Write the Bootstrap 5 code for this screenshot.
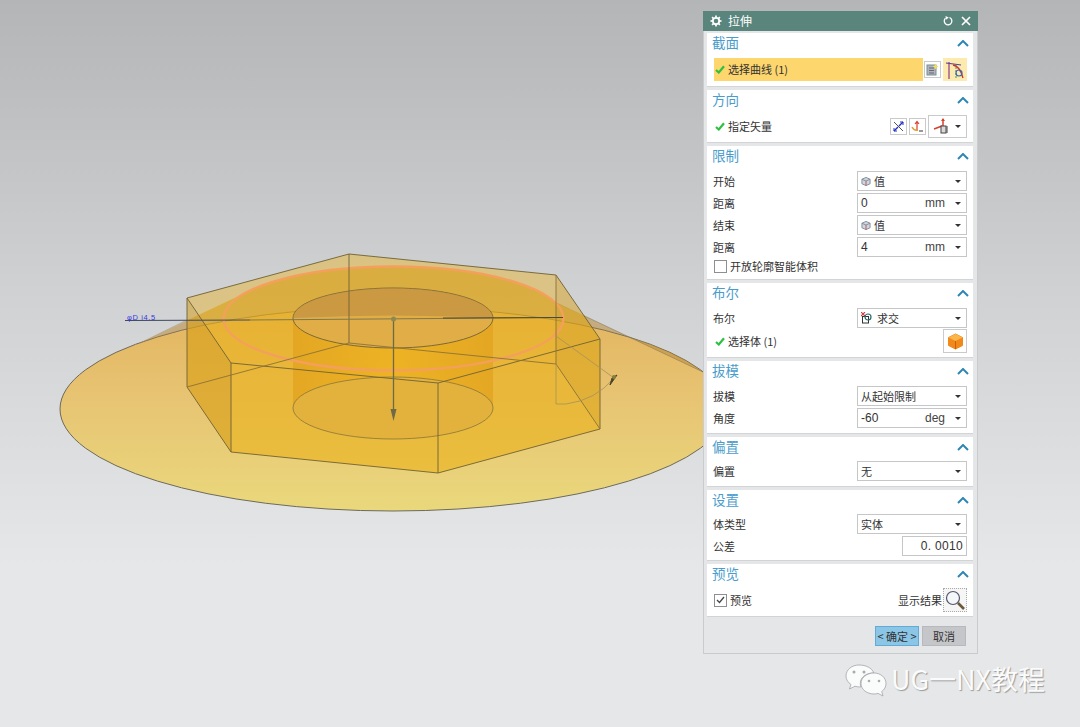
<!DOCTYPE html>
<html lang="zh"><head><meta charset="utf-8"><title>拉伸</title>
<link href="https://cdn.jsdelivr.net/npm/bootstrap@5.3.0/dist/css/bootstrap.min.css" rel="stylesheet">
<style>
html,body{margin:0;height:727px;overflow:hidden}
body{background:linear-gradient(#b4b5b6 0,#cfd1d3 40%,#e6e7e9 78%,#e6e7e9 100%);font-family:"Noto Sans CJK SC","Liberation Sans",sans-serif;font-size:11px;color:#333;position:relative}
.scene{position:absolute;left:0;top:0}
.dlg{position:absolute;left:703px;top:11px;width:275px;height:643px;background:#e5e6e8;border:1px solid #c9cbcd;border-top:0}
.dlg-head{height:20px;background:#5a857c;color:#fff;font-size:12px;margin:0 -1px;padding:0 7px}
.gear{margin-right:6px}
.dlg-body{padding:2px 4px 0 3px}
.sect{background:#fff;border-bottom:1px solid #d3d4d6;margin-bottom:3px;padding:0 6px}
.h-sec{height:54px}.h-dir{height:53px}.h-lim{height:134px}.h-boo{height:75px}.h-dra{height:73px}.h-off{height:50px}.h-set{height:71px}.h-pre{height:53px}
.sect-title{height:20px;color:#4a9ccb;font-size:13.5px;line-height:19px;margin:0 -2px 4px -1px}
.tight{margin-bottom:3px}
.wide{margin-bottom:5px}
.chev{width:12px;height:7px;margin-top:7px}
.rw{height:22px}
.rw-24{height:24px}
.rw-17{height:17px}
.sel{width:110px;height:20px;border:1px solid #c4c6c8;padding:0 5px 0 3px;background:#fff;flex:none}
.caret{width:0;height:0;border-left:3px solid transparent;border-right:3px solid transparent;border-top:3px solid #333;margin-left:auto;flex:none}
.caret-n{margin-left:0}
.unit{margin-left:auto;margin-right:10px;font-size:12px;font-family:"Liberation Sans",sans-serif;color:#444}
.num{font-family:"Liberation Sans",sans-serif;font-size:12px}
.chk{width:13px;height:13px;border:1px solid #8d8f91;background:#fff;flex:none;margin:0 3px 0 1px}
.ico-btn{border:1px solid #c8cacc;background:#fff;flex:none}
.ib-17{width:17px;height:17px;margin-right:2px}
.ib-24{width:24px;height:24px}
.ib-drop{width:39px;height:23px;padding:0 5px 0 3px}
.ib-hl{width:24px;height:23px;background:#fdeaaf}
.ib-dot{border-style:dotted;border-color:#aaa;background:#f6f6f6}
.tick{width:10px;height:9px;flex:none;margin:0 3px 0 2px}
.hl{background:#fdd66e;height:23px;width:209px;margin-left:1px}
.hl .tick{margin-left:1px}
.opt{width:10px;height:11px;margin-right:3px}
.act{height:20px;font-size:11px;padding:0;border-radius:0;line-height:18px;color:#333;width:44px}
.act-ok,.act-ok:hover{background:#8bc6e6;border:1px solid #62abd6}
.act-no,.act-no:hover{background:#c5c6c9;border:1px solid #b8b9bc}
.act-row{padding:6px 7px 0 0;gap:3px}
.res-lab{margin-right:1px}
.mark-wx{position:absolute;left:844px;top:660px;color:#fafbfb;font-size:27px;line-height:38px;text-shadow:1px 1px 1px #9a9b9c;white-space:nowrap}
.wx-ico{margin-right:3px}
.blue-note{font-size:7.5px;fill:#3a3ae0;font-family:"Liberation Sans",sans-serif;letter-spacing:.6px}
.tolb{width:65px;height:20px;border:1px solid #c4c6c8;text-align:right;padding-right:3px;font-size:12px;line-height:18px;font-family:"Liberation Sans",sans-serif;letter-spacing:.3px}
</style></head><body>

<svg class="scene" width="1080" height="727" viewBox="0 0 1080 727" xmlns="http://www.w3.org/2000/svg">
<defs>
<linearGradient id="disc" x1="0" y1="0" x2="0" y2="1"><stop offset="0" stop-color="#e3b45f"/><stop offset=".45" stop-color="#e7c473"/><stop offset="1" stop-color="#ead87c"/></linearGradient>
<linearGradient id="bore" x1="0" y1="0" x2="1" y2="0"><stop offset="0" stop-color="#e3a31e"/><stop offset=".5" stop-color="#eeb21f"/><stop offset="1" stop-color="#e3a31e"/></linearGradient>
<symbol id="chv" viewBox="0 0 12 7"><path d="M1 6 6 1 11 6" fill="none" stroke="#2f86b5" stroke-width="2"/></symbol>
<symbol id="tck" viewBox="0 0 10 9"><path d="M1 5 3.800 7.500 9 1.200" fill="none" stroke="#2fc043" stroke-width="2.200"/></symbol>
<symbol id="cub" viewBox="0 0 11 11"><path d="M5.500 1 10 3V8L5.500 10 1 8V3Z" fill="#cfd6de" stroke="#7d8a99"/><path d="M5.500 5V10" stroke="#c74a4a"/><path d="M1 3 5.500 5 10 3" fill="none" stroke="#7d8a99"/></symbol>
</defs>
<!-- disc -->
<ellipse cx="393" cy="409" rx="333" ry="102" fill="url(#disc)" stroke="#6d6a5c" stroke-width="1"/>
<!-- cone wedge above the disc edge, tangent to the sketch circle -->
<path d="M140 343 L245 293 A170 52 0 0 1 555 302 L703 372 A333 102 0 0 0 393 307 A333 102 0 0 0 140 343Z" fill="#b98a3a" fill-opacity=".55"/>
<line x1="555" y1="302" x2="703" y2="372" stroke="#8a7b55" stroke-width=".6"/>
<line x1="140" y1="343" x2="187" y2="320" stroke="#a58c5c" stroke-width=".5"/>
<!-- hex body -->
<polygon points="187,298 349,254 556,275 600,339 600,429 438,473 231,452 187,387" fill="#eab013" fill-opacity=".58"/>
<path d="M187 298 L349 254 L556 275 L584 316 L555 302 A170 52 0 0 0 245 293 L187 320Z" fill="#d5c9ae" fill-opacity=".45"/>
<polygon points="187,298 231,363 231,452 187,387" fill="#b8862a" fill-opacity=".22"/>
<polygon points="556,275 600,339 600,429 556,364" fill="#b8862a" fill-opacity=".16"/>
<!-- bore -->
<path d="M293 318 V408 A100 31 0 0 1 493 408 V318 A100 30 0 0 1 293 318Z" fill="url(#bore)" fill-opacity=".8"/>
<ellipse cx="393" cy="408" rx="100" ry="31" fill="#e2b23d" stroke="#8a7338" stroke-width=".8"/>
<ellipse cx="393" cy="318" rx="100" ry="30" fill="#e0ad46" stroke="#6f6136" stroke-width=".9"/>
<path d="M293 318 A100 30 0 0 1 493 318 A200 18 0 0 0 293 318Z" fill="#bb8c40" fill-opacity=".6"/>
<!-- orange sketch -->
<ellipse cx="393.500" cy="318.500" rx="170" ry="52" fill="none" stroke="#f4a05c" stroke-width="2.400"/>
<!-- edges -->
<g fill="none" stroke="#6f6136" stroke-width=".9">
<polygon points="187,298 349,254 556,275 600,339 438,383 231,363"/>
<polyline points="187,298 187,387 231,452 438,473 600,429 600,339"/>
<line x1="231" y1="363" x2="231" y2="452"/><line x1="438" y1="383" x2="438" y2="473"/>
<line x1="349" y1="254" x2="349" y2="343"/>
<polyline points="187,387 349,343 556,364 600,429" stroke="#8a7338"/>
<line x1="556" y1="275" x2="556" y2="364" stroke="#8a7338"/>
</g>
<g fill="none" stroke="#a3925a" stroke-width=".8">
<path d="M556 364 V404 H566 Q596 400 614 378 L556 336"/>
</g>
<polygon points="610,385 617,375 612,378" fill="#4a442a" stroke="#4a442a"/>
<circle cx="614" cy="377" r="2" fill="#8a7f3e"/>
<!-- axis -->
<line x1="125" y1="320.500" x2="250" y2="320" stroke="#3d4a5e" stroke-width="1"/>
<line x1="250" y1="320" x2="563" y2="317.500" stroke="#7d7850" stroke-width="1"/>
<line x1="443" y1="318" x2="563" y2="317.500" stroke="#3e3d30" stroke-width=".8"/>
<text class="blue-note" x="127" y="320">φD i4.5</text>
<line x1="393.500" y1="319" x2="393.500" y2="412" stroke="#6e6a45" stroke-width="1.300"/>
<polygon points="390.500,409 396.500,409 393.500,421" fill="#6e6a45"/>
<circle cx="393.500" cy="319" r="2.500" fill="#8c8a52"/>
</svg>

<div class="dlg">
  <div class="dlg-head d-flex align-items-center">
    <svg class="gear" width="12" height="12" viewBox="0 0 12 12"><circle cx="6" cy="6" r="3.200" fill="none" stroke="#fff" stroke-width="1.800"/><g stroke="#fff" stroke-width="1.700"><line x1="6" y1=".5" x2="6" y2="2.500"/><line x1="6" y1="9.500" x2="6" y2="11.500"/><line x1=".5" y1="6" x2="2.500" y2="6"/><line x1="9.500" y1="6" x2="11.500" y2="6"/><line x1="2.100" y1="2.100" x2="3.500" y2="3.500"/><line x1="8.500" y1="8.500" x2="9.900" y2="9.900"/><line x1="2.100" y1="9.900" x2="3.500" y2="8.500"/><line x1="8.500" y1="3.500" x2="9.900" y2="2.100"/></g></svg>
    <span>拉伸</span>
    <svg class="ms-auto me-2" width="10" height="10" viewBox="0 0 10 10"><path d="M6.500 1.500A3.800 3.800 0 1 1 2.500 2.200" fill="none" stroke="#fff" stroke-width="1.300"/><path d="M2.500 0 3 3.800 5.800 1.500Z" fill="#fff"/></svg>
    <svg width="10" height="10" viewBox="0 0 10 10"><path d="M1 1 9 9M9 1 1 9" stroke="#fff" stroke-width="1.700"/></svg>
  </div>
  <div class="dlg-body">
    <div class="sect h-sec">
      <div class="sect-title wide d-flex justify-content-between">截面<svg class="chev"><use href="#chv"/></svg></div>
      <div class="d-flex align-items-center">
        <div class="hl d-flex align-items-center"><svg class="tick"><use href="#tck"/></svg>选择曲线 (1)</div>
        <div class="ico-btn ib-17 ms-auto d-flex align-items-center justify-content-center"><svg width="13" height="13" viewBox="0 0 13 13"><rect x="1" y="2" width="9" height="10" fill="#aeb4b8" stroke="#7b8b97"/><path d="M3 5H8M3 7.500H8M3 10H8" stroke="#667"/><path d="M9.500 .5 10.400 2.600 12.500 3.500 10.400 4.400 9.500 6.500 8.600 4.400 6.500 3.500 8.600 2.600Z" fill="#f1df55"/></svg></div>
        <div class="ib-hl d-flex align-items-center justify-content-center"><svg width="20" height="20" viewBox="0 0 20 20"><path d="M1 3 16 5" stroke="#4a3f9a" stroke-width="1.200" fill="none"/><path d="M4 2V19" stroke="#8a3a8a" stroke-width="1.200"/><path d="M11 4V19" stroke="#3d9a6a" stroke-width="1" stroke-dasharray="2 1"/><path d="M8 5Q15 6 18 18" stroke="#d2302f" stroke-width="1.300" fill="none"/><circle cx="14" cy="13" r="3" fill="none" stroke="#3a67b0" stroke-width="1.200"/></svg></div>
      </div>
    </div>
    <div class="sect h-dir">
      <div class="sect-title d-flex justify-content-between">方向<svg class="chev"><use href="#chv"/></svg></div>
      <div class="d-flex align-items-center rw-24">
        <svg class="tick"><use href="#tck"/></svg>指定矢量
        <div class="ico-btn ib-17 ms-auto d-flex align-items-center justify-content-center"><svg width="13" height="13" viewBox="0 0 13 13"><path d="M7 6 11 2M2 11 6 7" stroke="#2230c8" stroke-width="1.400"/><path d="M2 2 11 11" stroke="#555" stroke-width="1"/><path d="M8 2H11V5M2 8V11H5" fill="none" stroke="#2230c8"/></svg></div>
        <div class="ico-btn ib-17 d-flex align-items-center justify-content-center"><svg width="13" height="13" viewBox="0 0 13 13"><path d="M6 10V2M4 4 6 1.500 8 4" fill="none" stroke="#d6402c" stroke-width="1.200"/><path d="M1 7Q3 11 7 10" fill="none" stroke="#e89a32" stroke-width="1.500"/><path d="M8 11H12" stroke="#333"/></svg></div>
        <div class="ico-btn ib-drop d-flex align-items-center"><svg width="20" height="18" viewBox="0 0 20 18"><path d="M2 12 10 9" stroke="#d6402c" stroke-width="1.500"/><path d="M11 9V2" stroke="#d6402c" stroke-width="1.500"/><path d="M9 4 11 1 13 4Z" fill="#d6402c"/><rect x="9" y="9" width="5" height="7" fill="#d9d9d9" stroke="#444"/><path d="M15 9V16" stroke="#444"/></svg><span class="caret"></span></div>
      </div>
    </div>
    <div class="sect h-lim">
      <div class="sect-title d-flex justify-content-between">限制<svg class="chev"><use href="#chv"/></svg></div>
      <div class="rw d-flex align-items-center justify-content-between">开始<div class="sel d-flex align-items-center"><svg class="opt"><use href="#cub"/></svg>值<span class="caret"></span></div></div>
      <div class="rw d-flex align-items-center justify-content-between">距离<div class="sel d-flex align-items-center"><span class="num">0</span><span class="unit">mm</span><span class="caret caret-n"></span></div></div>
      <div class="rw d-flex align-items-center justify-content-between">结束<div class="sel d-flex align-items-center"><svg class="opt"><use href="#cub"/></svg>值<span class="caret"></span></div></div>
      <div class="rw d-flex align-items-center justify-content-between">距离<div class="sel d-flex align-items-center"><span class="num">4</span><span class="unit">mm</span><span class="caret caret-n"></span></div></div>
      <div class="rw-17 d-flex align-items-center"><span class="chk"></span>开放轮廓智能体积</div>
    </div>
    <div class="sect h-boo">
      <div class="sect-title d-flex justify-content-between">布尔<svg class="chev"><use href="#chv"/></svg></div>
      <div class="rw d-flex align-items-center justify-content-between">布尔<div class="sel d-flex align-items-center"><svg class="me-1" width="12" height="12" viewBox="0 0 12 12"><rect x="1.500" y="4.500" width="6" height="6.500" fill="#fff" stroke="#333"/><circle cx="7" cy="5" r="3" fill="none" stroke="#2a6a6a" stroke-width="1.200"/><path d="M0 0 4 4M4 0 0 4" stroke="#d23a3a" stroke-width="1.100"/></svg>求交<span class="caret"></span></div></div>
      <div class="rw-24 d-flex align-items-center">
        <svg class="tick"><use href="#tck"/></svg>选择体 (1)
        <div class="ico-btn ib-24 ms-auto d-flex align-items-center justify-content-center"><svg width="17" height="17" viewBox="0 0 17 17"><path d="M8.500 1 15.500 4.500V12.500L8.500 16 1.500 12.500V4.500Z" fill="#f0881a" stroke="#f0881a" stroke-linejoin="round"/><path d="M8.500 1 15.500 4.500 8.500 8 1.500 4.500Z" fill="#fbb64a"/><path d="M8.500 8V16" stroke="#c85f10"/></svg></div>
      </div>
    </div>
    <div class="sect h-dra">
      <div class="sect-title d-flex justify-content-between">拔模<svg class="chev"><use href="#chv"/></svg></div>
      <div class="rw d-flex align-items-center justify-content-between">拔模<div class="sel d-flex align-items-center">从起始限制<span class="caret"></span></div></div>
      <div class="rw d-flex align-items-center justify-content-between">角度<div class="sel d-flex align-items-center"><span class="num">-60</span><span class="unit">deg</span><span class="caret caret-n"></span></div></div>
    </div>
    <div class="sect h-off">
      <div class="sect-title tight d-flex justify-content-between">偏置<svg class="chev"><use href="#chv"/></svg></div>
      <div class="rw d-flex align-items-center justify-content-between">偏置<div class="sel d-flex align-items-center">无<span class="caret"></span></div></div>
    </div>
    <div class="sect h-set">
      <div class="sect-title tight d-flex justify-content-between">设置<svg class="chev"><use href="#chv"/></svg></div>
      <div class="rw d-flex align-items-center justify-content-between">体类型<div class="sel d-flex align-items-center">实体<span class="caret"></span></div></div>
      <div class="rw d-flex align-items-center justify-content-between">公差<div class="tolb">0. 0010</div></div>
    </div>
    <div class="sect h-pre">
      <div class="sect-title d-flex justify-content-between">预览<svg class="chev"><use href="#chv"/></svg></div>
      <div class="d-flex align-items-center rw-24">
        <span class="chk d-flex align-items-center justify-content-center"><svg width="9" height="8" viewBox="0 0 9 8"><path d="M1 4 3.500 6.500 8 1" fill="none" stroke="#444" stroke-width="1.300"/></svg></span>预览
        <span class="ms-auto res-lab">显示结果</span>
        <div class="ico-btn ib-24 ib-dot d-flex align-items-center justify-content-center"><svg width="20" height="20" viewBox="0 0 20 20"><circle cx="8" cy="8" r="6.500" fill="#f4f8fa" stroke="#556" stroke-width="1.200"/><path d="M13 13 19 19" stroke="#6a5a3a" stroke-width="2.600"/></svg></div>
      </div>
    </div>
    <div class="act-row d-flex justify-content-end">
      <button type="button" class="btn act act-ok">&lt; 确定 &gt;</button>
      <button type="button" class="btn act act-no">取消</button>
    </div>
  </div>
</div>

<div class="mark-wx d-flex align-items-center">
  <svg class="wx-ico" width="44" height="38" viewBox="0 0 44 38"><path d="M15 5C8 5 2 9.500 2 16c0 3.500 2 6.500 5 8.500L5.500 29l5.500-2.800c1.500.5 3 .7 4.500.7h1.500c-.5-1.200-.7-2.500-.7-3.500 0-6.500 6-10.500 13.500-10.500C28 8 22 5 15 5Z" fill="#fafbfb" stroke="#9a9b9c" stroke-width=".7"/><path d="M30 13C23 13 17 17.500 17 23.500S23 34 30 34c1.500 0 2.800-.2 4-.6L39 36l-1.300-4.500c2.700-1.800 4.300-4.600 4.300-8C42 17.500 36.500 13 30 13Z" fill="#fafbfb" stroke="#9a9b9c" stroke-width=".7"/><circle cx="10" cy="12" r="1.500" fill="#a9abac"/><circle cx="20" cy="12" r="1.500" fill="#a9abac"/><circle cx="25" cy="21" r="1.300" fill="#a9abac"/><circle cx="35" cy="21" r="1.300" fill="#a9abac"/></svg>
  <span>UG一NX教程</span>
</div>
</body></html>
